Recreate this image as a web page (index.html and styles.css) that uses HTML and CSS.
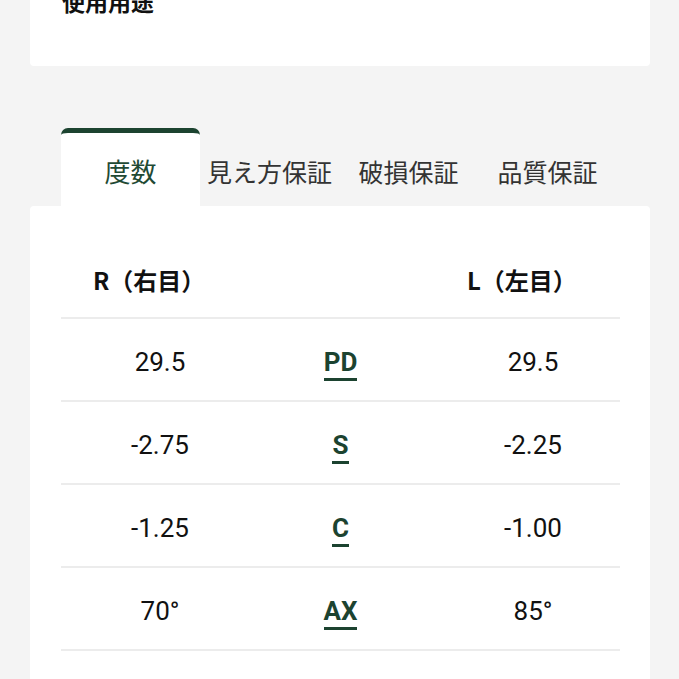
FILE: index.html
```html
<!DOCTYPE html>
<html lang="ja">
<head>
<meta charset="utf-8">
<title>度数</title>
<link rel="stylesheet" href="styles.css">
</head>
<body>
  <section class="top-card">
    <h2 class="top-title">使用用途</h2>
  </section>

  <nav class="tabs">
    <div class="tab tab-active">度数</div>
    <div class="tab">見え方保証</div>
    <div class="tab">破損保証</div>
    <div class="tab">品質保証</div>
  </nav>

  <section class="card">
    <div class="rx">
      <div class="rx-head">
        <div class="head-r">R（右目）</div>
        <div></div>
        <div class="head-l">L（左目）</div>
      </div>
      <div class="rx-row">
        <div class="val">29.5</div>
        <div class="lab"><span class="lab-text">PD</span></div>
        <div class="val val-l">29.5</div>
      </div>
      <div class="rx-row">
        <div class="val">-2.75</div>
        <div class="lab"><span class="lab-text">S</span></div>
        <div class="val val-l">-2.25</div>
      </div>
      <div class="rx-row">
        <div class="val">-1.25</div>
        <div class="lab"><span class="lab-text">C</span></div>
        <div class="val val-l">-1.00</div>
      </div>
      <div class="rx-row">
        <div class="val">70°</div>
        <div class="lab"><span class="lab-text">AX</span></div>
        <div class="val val-l">85°</div>
      </div>
    </div>
  </section>
</body>
</html>
```

FILE: styles.css
```css
html, body {
  margin: 0;
  padding: 0;
}

body {
  background: #f4f4f4;
  font-family: "Noto Sans CJK JP", "Noto Sans", sans-serif;
  color: #111;
  overflow: hidden;
}

.top-card {
  display: flow-root;
  background: #fff;
  margin: 0 29px 0 30px;
  height: 66px;
  padding-left: 32px;
  border-radius: 0 0 4px 4px;
}

.top-title {
  margin: -15px 0 0;
  font-size: 23px;
  line-height: 32px;
  font-weight: 700;
  color: #111;
}

.tabs {
  display: flex;
  margin: 62px 29px 0 30px;
  padding-left: 31px;
}

.tab {
  width: 139px;
  box-sizing: border-box;
  border-top: 5px solid transparent;
  padding: 20px 0 17px;
  line-height: 36px;
  font-size: 25px;
  text-align: center;
  color: #333;
  white-space: nowrap;
}

.tab-active {
  background: #fff;
  border-top-color: #1c4330;
  border-radius: 7px 7px 0 0;
  color: #1f4a34;
  font-size: 26px;
}

.card {
  background: #fff;
  margin: 0 29px 0 30px;
  padding: 0 30px 60px 31px;
  border-radius: 4px 4px 0 0;
}

.rx-head,
.rx-row {
  display: grid;
  grid-template-columns: 198px 163px 1fr;
  border-bottom: 2px solid #ececec;
}

.rx-head {
  padding: 58px 0 21px;
  line-height: 32px;
  font-size: 24px;
  font-weight: 700;
}

.head-r {
  padding-left: 32px;
}

.head-l {
  padding-left: 45px;
}

.rx-row {
  box-sizing: border-box;
  height: 83px;
  padding-top: 28px;
  line-height: 30px;
  font-family: Roboto, "Liberation Sans", sans-serif;
  font-size: 26px;
  overflow: hidden;
}

.val {
  text-align: center;
  color: #111;
}

.val-l {
  padding-left: 24px;
}

.lab {
  text-align: center;
}

.lab-text {
  display: inline-block;
  font-weight: 700;
  color: #1c4330;
  border-bottom: 3px solid #1c4330;
  line-height: 24px;
  padding-bottom: 4px;
}
```
